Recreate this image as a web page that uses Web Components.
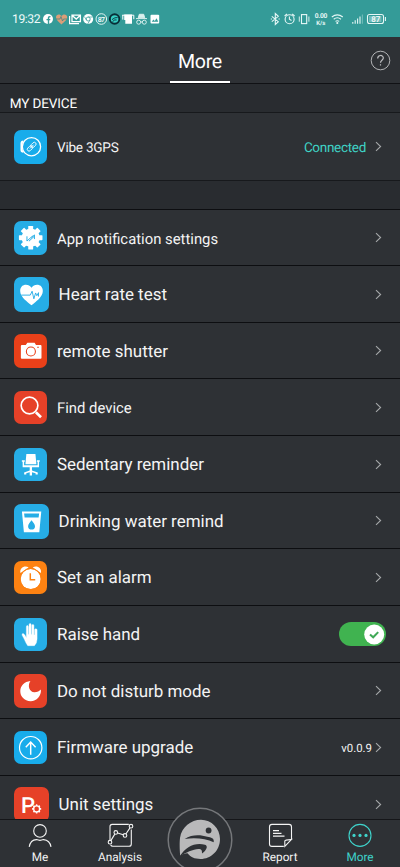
<!DOCTYPE html>
<html lang="en">
<head>
<meta charset="utf-8">
<title>More</title>
<style>
html,body{margin:0;height:100%;background:#2e3135}
body{font-family:Roboto,"Noto Sans",sans-serif;color:#f4f4f4;overflow:hidden;text-rendering:geometricPrecision}
</style>
</head>
<body>
<more-screen></more-screen>
<script>
const define = (name, html) => customElements.define(name, class extends HTMLElement {
  connectedCallback() {
    if (this.shadowRoot) return;
    const t = document.createElement('template');
    t.innerHTML = typeof html === 'function' ? html(this) : html;
    this.attachShadow({mode: 'open'}).append(t.content.cloneNode(true));
  }
});

const gear = (cx, cy, r, w, h, n) => {
  let s = '';
  for (let i = 0; i < n; i++) s += `<rect x="${cx - w / 2}" y="${cy - r}" width="${w}" height="${h}" rx=".6" transform="rotate(${i * 360 / n} ${cx} ${cy})"/>`;
  return s;
};

/* Tile glyphs share a 34 x 34 grid. */
const glyphs = {
  watch: ['#18aceb', `<g fill="none" stroke="#fff"><circle cx="17.8" cy="17" r="9.3" stroke-width="1.3"/><path d="M9.6 11.8Q7.6 12 7.6 13.7V20.3Q7.6 22 9.6 22.2" stroke-width="2"/><g stroke-width=".9" transform="rotate(-45 18 17)"><rect x="12.4" y="15.2" width="6.2" height="3.6" rx="1.8"/><rect x="17.4" y="15.2" width="6.2" height="3.6" rx="1.8"/><path d="M15.4 17H20.8"/></g></g>`],
  gear: ['#26ade6', `<g fill="#fff"><circle cx="17" cy="17" r="9.3"/>${gear(17, 17, 12, 5, 6, 8)}</g><path d="M13.2 15.6V20.4L19 15.2M15.2 20.6L20.8 15.4M17.8 17L20.8 14.2V18.4" fill="none" stroke="#26ade6" stroke-width="1"/>`],
  heart: ['#26ade6', `<path d="M17 27.5C13 24 6 19.4 6 13.5C6 6.4 14.2 5.7 17 10.5C19.8 5.7 28 6.4 28 13.5C28 19.4 21 24 17 27.5Z" fill="#fff"/><path d="M7 17.6H15.8L17.6 13.8L19.3 21.2L21 15.5L22.2 18.2L23.8 15.2V19" fill="none" stroke="#26ade6" stroke-width=".9"/>`],
  camera: ['#ea4019', `<path d="M8 11.2H12L13.6 9H21L22.4 11.2H27Q28 11.2 28 12.2V24.2Q28 25.2 27 25.2H8Q7 25.2 7 24.2V12.2Q7 11.2 8 11.2Z" fill="#fff"/><circle cx="17.2" cy="17.8" r="4.6" fill="none" stroke="#ea4019" stroke-width="1.1"/><rect x="23.6" y="13" width="1.7" height="1" fill="#ea4019"/>`],
  search: ['#e64128', `<circle cx="15.8" cy="14.8" r="8.5" fill="none" stroke="#fff" stroke-width="1.7"/><path d="M22.3 21.7L27.5 26.7" stroke="#fff" stroke-width="2.7"/>`],
  chair: ['#26ade6', `<g fill="#fff"><path d="M12.6 6.2H21.8L22.8 16.5H11.6Z"/><path d="M8 12.6H11V14H10.3V17.5H24V14H23.2V12.6H26.2V14H25.5V19.7H18.3V23L24.2 25V27H22V25.8L18.3 24.8V28H16V24.8L12.5 25.8V27H10.3V25L16 23V19.7H8.8V14H8Z"/></g>`],
  cup: ['#26ade6', `<path d="M7.7 7.4H26.5L24.6 27.4H9.6ZM9.8 9.2L10.3 13.1H23.9L24.4 9.2Z" fill="#fff" fill-rule="evenodd"/><path d="M17 15.8C18.5 18 20.4 19.7 20.4 21.5A3.3 3.3 0 0 1 13.7 21.5C13.7 19.7 15.6 18 17 15.8Z" fill="#26ade6"/>`],
  alarm: ['#fd8212', `<g fill="#fff"><circle cx="17" cy="18.4" r="10.2"/><path d="M6.6 12.2C5.3 6.3 11.5 4 14.9 6.5ZM27.4 12.2C28.7 6.3 22.5 4 19.1 6.5Z"/></g><circle cx="17" cy="18.4" r="10.8" fill="none" stroke="#fd8212" stroke-width="1"/><path d="M16.6 12.6V19H21.6" fill="none" stroke="#fd8212" stroke-width="1.5"/>`],
  hand: ['#26ade6', `<path d="M12.6 20V9Q12.6 7.7 13.6 7.7T14.6 9V16.5H15.3V6.9Q15.3 5.7 16.4 5.7T17.5 6.9V16.5H18.2V7.7Q18.2 6.6 19.2 6.6T20.3 7.7V17H21V12Q21 11 22.2 11T23.5 12V21.5Q23.5 25.5 20.8 28.2H14Q12 25.5 10.4 21.5L8.2 17.4Q8 15.6 9.4 15.9Q10.8 16.4 12.6 20Z" fill="#fff" stroke="#fff" stroke-width=".4"/>`],
  moon: ['#e64128', `<path d="M16.7 7.2C13.5 11.5 15.5 18.6 20.8 18.6C23.8 18.6 25.9 17.4 27.4 15.8C28 22.5 23 27.7 17 27.7C10.5 27.7 6.3 23 6.4 17.4C6.5 12 10.6 7.9 16.7 7.2Z" fill="#fff"/>`],
  upgrade: ['#18aceb', `<g fill="none" stroke="#fff"><circle cx="17" cy="17" r="11.4" stroke-width="1.2"/><path d="M17 24.2V11.4M12 16.5L17 11.3L22 16.5" stroke-width="1.5"/></g>`],
  unit: ['#e64128', `<text x="6.8" y="25" font-size="21.5" font-family="Roboto,sans-serif" font-weight="500" fill="#fff">P</text><circle cx="22" cy="21.3" r="4.9" fill="#e64128"/><circle cx="22" cy="21.3" r="2.9" fill="none" stroke="#fff" stroke-width="1.3"/><g fill="#fff">${gear(22, 21.3, 4.5, 1.6, 1.6, 8)}</g>`]
};
define('tile-icon', el => {
  const [bg, art] = glyphs[el.getAttribute('name')], s = el.getAttribute('size');
  return `<style>:host{display:block;width:${s}px;height:${s}px;border-radius:7px;background:${bg};overflow:hidden;flex:none}svg{display:block;width:100%;height:100%}</style><svg viewBox="0 0 34 34">${art}</svg>`;
});

define('status-bar', `<style>
:host{display:flex;height:37px;box-sizing:border-box;background:#349b98;align-items:center;padding:0 11px 0 12px;justify-content:space-between;color:#eefafa}
div{display:flex;align-items:center}svg{display:block}
.time{font-size:12.2px;width:31px;white-space:nowrap;letter-spacing:-.45px;padding-top:1px}
</style>
<div><span class="time">19:32</span>
<svg width="118" height="16" viewBox="43 10 118 16">
<circle cx="48" cy="18" r="5" fill="#fff"/><path d="M48.5 23V17Q48.5 15.5 50.5 15.6M46.5 18.6H50.3" stroke="#349b98" stroke-width="1.4" fill="none"/>
<path d="M61.5 23.4C59 21 56 18.8 56 16.2C56 13 60 12.5 61.5 15C63 12.5 67.2 13 67.2 16.2C67.2 18.8 64 21 61.5 23.4Z" fill="#d99e78"/><path d="M56 18H60L61 15.5L62.5 20L63.5 18H67" stroke="#4a8582" stroke-width=".8" fill="none"/>
<path d="M69.6 15V22.6H79" fill="none" stroke="#fff" stroke-width="1.2"/><path d="M72 14.2H80.4V20.7H72ZM72 14.2L76.2 18L80.4 14.2" fill="none" stroke="#fff" stroke-width="1.3"/>
<circle cx="88.2" cy="18" r="5" fill="#fff"/><circle cx="88.2" cy="18" r="2" fill="none" stroke="#349b98" stroke-width=".8"/><path d="M88.2 16H92.7M86.5 19L84.3 15.5M90 19L87.7 23" stroke="#349b98" stroke-width=".7"/>
<circle cx="101.3" cy="18" r="5.3" fill="none" stroke="#e0f4f3" stroke-width="1"/><text x="97.7" y="20.6" font-size="7" font-weight="500" font-family="Roboto,sans-serif" fill="#fff" textLength="7.2">87</text>
<circle cx="114.6" cy="18" r="5.7" fill="#082e37"/><circle cx="114.6" cy="18" r="3.8" fill="#35cfc4"/><path d="M112 18.6Q115 16 117.6 16.6M112.5 20.6Q115 18 116.6 19" stroke="#082e37" stroke-width=".9" fill="none"/>
<path d="M124.2 13.4H132V22.8H125.3V19H124.2Z" fill="#fff"/><path d="M122.3 14.2H133.8V18.2M122.8 14V18.6" stroke="#fff" fill="none"/>
<path d="M136 17.6H147M138.3 16.8L139.3 13.3H143.7L144.7 16.8Z" stroke="#d8efed" fill="#d8efed"/><g fill="none" stroke="#d8efed"><circle cx="138.7" cy="21.2" r="2"/><circle cx="144.3" cy="21.2" r="2"/><path d="M140.7 21H142.3"/></g>
<rect x="150.5" y="13.7" width="8.7" height="8.8" rx="1" fill="#fff"/><path d="M151.7 20.8L153.4 18.5L154.8 20L156.5 17.3L158.3 20.8Z" fill="#349b98"/>
</svg></div>
<svg width="119" height="16" viewBox="270 10 119 16" fill="none" stroke="#e6f7f6" stroke-width="1.1">
<path d="M271.8 15.3L278.3 20.7L275.3 23.5V12.5L278.3 15.3L271.8 20.7M270.8 18H272M278.5 18H279.8"/>
<circle cx="289.6" cy="18.2" r="4.5"/><path d="M289.4 15.5V18.3L291.5 19.5M284.6 15L287 13M292.2 13L294.6 15"/>
<rect x="301.5" y="13.6" width="5.2" height="9"/><path d="M299.3 15.5V20.7M308.9 15.5V20.7" stroke-width=".9"/>
<g fill="#e6f7f6" stroke="none" font-family="Roboto,sans-serif" font-weight="700"><text x="314.8" y="17.4" font-size="6.7" textLength="12.5">0.00</text><text x="316.3" y="23.8" font-size="6" textLength="9">K/s</text></g>
<path d="M331.8 16Q337.3 11.7 342.8 16M333.7 18.2Q337.3 15.3 341 18.2M335.5 20.4Q337.3 19 339.2 20.4"/><circle cx="337.3" cy="22" r=".5"/>
<path d="M352.8 21V22.8M355.2 19.3V22.8M357.6 17.5V22.8M360 15.5V22.8"/><path d="M362.4 13.5V22.8" opacity=".35"/>
<rect x="367.5" y="13.5" width="16" height="9" rx="2"/><path d="M385.4 16V20"/><rect x="369" y="15" width="12.5" height="6" fill="#e6f7f6" stroke="none" opacity=".35"/>
<text x="371.2" y="20.9" font-size="8" font-weight="500" font-family="Roboto,sans-serif" fill="#fff" stroke="none" textLength="9">87</text>
</svg>`);

define('page-header', `<style>
:host{display:grid;grid-template-columns:1fr 60px 1fr;height:47px;box-sizing:border-box;border-bottom:1px solid #101114;background:#2e3135}
h1{margin:0;font:400 19.6px/46px Roboto,sans-serif;letter-spacing:-.3px;height:46px;color:#fff;text-align:center;box-shadow:inset 0 -2px #fff;padding-top:2px;box-sizing:border-box}
svg{grid-column:3;justify-self:end;margin:13px 9px 0 0}
</style><span></span><h1><slot></slot></h1>
<svg width="21" height="21" viewBox="0 0 21 21" fill="none" stroke="#c0c1c3"><circle cx="10.5" cy="10.5" r="9.3" stroke-width=".9"/><path d="M7.7 8.5C7.7 4.4 13.3 4.7 13.3 8C13.3 10.3 10.5 10.2 10.5 12.8M10.5 14.2V15.6" stroke-width="1.2"/></svg>`);

define('section-label', `<style>:host{display:block;height:29px;box-sizing:border-box;background:#292c30;border-bottom:1px solid #17191c;padding-left:9.7px;font-size:13.5px;letter-spacing:-.1px;line-height:41px;color:#fff}</style><slot></slot>`);

define('setting-row', el => `<style>
:host{display:flex;align-items:center;height:${el.getAttribute('h')}px;box-sizing:border-box;border-bottom:1px solid ${el.getAttribute('line') || '#0d0e11'};padding:1px 17px 0 14px;background:#2e3135;flex:none}
.label{margin-left:9.6px;padding-top:1px;font-size:${el.getAttribute('fs') || 16.95}px;line-height:20px;flex:1;white-space:nowrap;letter-spacing:${el.getAttribute('ls') || 0}px}
svg{display:block;margin-left:2px}
::slotted(*){flex:none}
</style><tile-icon name="${el.getAttribute('icon')}" size="${el.getAttribute('size') || 33.4}"></tile-icon><span class="label"><slot></slot></span><slot name="value"></slot>
${el.hasAttribute('toggle') ? '' : '<svg width="9" height="12" viewBox="0 0 9 12"><path d="M2 1.2L6.6 5.5L2 9.8" fill="none" stroke="#a5a7a9" stroke-width="1.1"/></svg>'}`);

define('toggle-switch', `<style>:host{display:flex;justify-content:flex-end;width:47px;height:24px;border-radius:12px;background:#40b350;box-sizing:border-box;padding:1.5px;margin:-1px -3px 0 0}svg{display:block}</style>
<svg width="21" height="21"><circle cx="10.2" cy="10.5" r="10" fill="#fff"/><path d="M6 10.4L9.2 13.3L14.2 8.1" fill="none" stroke="#40a957" stroke-width="2"/></svg>`);

const tabs = {
  me: '<circle cx="13" cy="8.5" r="6.3"/><path d="M2.2 24.5C3 19.8 6 17.4 9.5 17.2Q13 18.7 16.5 17.2C20 17.4 23.2 19.8 24 24.5"/>',
  analysis: '<path d="M21.8 2H5.2Q3 2 3 4.2V17.8M3.6 22.3Q4.2 23.8 5.8 23.8H22Q24.3 23.8 24.3 21.5V7"/><circle cx="3" cy="19.8" r="1.8"/><circle cx="8.8" cy="10" r="1.8"/><circle cx="18" cy="13" r="1.8"/><circle cx="24" cy="3.8" r="1.8"/><path d="M4 18L7.8 11.7M10.6 10.6L16.2 12.4M19 11.4L23 5.5"/>',
  report: '<path d="M16.8 24H5Q2.5 24 2.5 21.5V4.5Q2.5 2 5 2H22Q24.5 2 24.5 4.5V17M24.5 17L17.8 24V18.8Q18 17.8 19 17.7Z"/><path d="M6 8.2H12M6 11H14.5M6 13.7H17.5"/>',
  more: '<circle cx="13" cy="13" r="11"/><g fill="currentColor" stroke="none"><circle cx="7" cy="13" r="1.6"/><circle cx="13" cy="13" r="1.6"/><circle cx="19" cy="13" r="1.6"/></g>'
};
define('tab-item', el => `<style>:host{display:flex;flex-direction:column;align-items:center;padding-top:2px;font-size:11.8px;line-height:14px;color:${el.hasAttribute('active') ? '#3fd3cb' : '#f4f4f4'}}svg{display:block;margin-bottom:1px}</style>
<svg width="27" height="27" viewBox="0 -.4 27 27" fill="none" stroke="currentColor" stroke-width="1.1">${tabs[el.getAttribute('icon')]}</svg><slot></slot>`);

define('run-button', `<style>:host{display:block;width:66px;height:66px}svg{display:block}</style>
<svg width="66" height="66" viewBox="0 0 66 66"><circle cx="33" cy="33" r="31.8" fill="#2e3135" stroke="#75777a" stroke-width="1.5"/>
<path d="M13.2 48.5C12.6 42 12.5 35 13 31C14.5 20 24 12.7 34 12.7C44.5 12.7 53 21.3 53 32C53 43.5 44 52 33.5 52C27.5 52 23.5 50 20.5 46.3C18 46.2 15.5 47.2 13.2 48.5Z" fill="#b9b9ba"/>
<g fill="#2e3135"><circle cx="41.6" cy="23.5" r="2.9"/><path d="M17.7 32C25 27 34 27.8 40.3 29.8C44 30.5 47.5 31 46.7 35.3C39 31.5 28 30.5 17.7 32Z"/><path d="M13 49C18.5 40 28 35 38 37.7C41.4 39 39.7 43 35 46.5C35 44.5 35 43 33.5 42.3C28 41 19.5 45.7 13 49Z"/></g></svg>`);

define('tab-bar', `<style>:host{display:grid;grid-template-columns:repeat(5,80px);height:48px;box-sizing:border-box;border-top:1px solid #151619;background:#2e3135;position:relative;flex:none}
run-button{position:absolute;left:167px;top:-13px}
tab-item:nth-of-type(3){grid-column:4}</style>
<tab-item icon="me">Me</tab-item><tab-item icon="analysis">Analysis</tab-item><tab-item icon="report">Report</tab-item><tab-item icon="more" active>More</tab-item><run-button></run-button>`);

define('more-screen', `<style>
:host{display:flex;flex-direction:column;width:400px;height:867px;overflow:hidden}
main{flex:1;min-height:0;overflow:hidden;display:flex;flex-direction:column}
.gap{height:29px;box-sizing:border-box;background:#292c30;border-bottom:1px solid #0d0e11;flex:none}
.ok{color:#3fd3c6;font-size:13.5px;letter-spacing:-.3px;margin-right:6px;padding-top:1px}.ver{font-size:11.4px}
</style>
<status-bar></status-bar><page-header>More</page-header>
<main><section-label>MY DEVICE</section-label>
<setting-row icon="watch" h="68" fs="13.6" ls="-.25" line="#17191c">Vibe 3GPS<span slot="value" class="ok">Connected</span></setting-row>
<div class="gap"></div>
<setting-row icon="gear" h="56" fs="14.85">App notification settings</setting-row>
<setting-row icon="heart" h="57" size="35">Heart rate test</setting-row>
<setting-row icon="camera" h="56">remote shutter</setting-row>
<setting-row icon="search" h="57" fs="14.85">Find device</setting-row>
<setting-row icon="chair" h="57">Sedentary reminder</setting-row>
<setting-row icon="cup" h="56" size="35">Drinking water remind</setting-row>
<setting-row icon="alarm" h="57">Set an alarm</setting-row>
<setting-row icon="hand" h="57" toggle>Raise hand<toggle-switch slot="value"></toggle-switch></setting-row>
<setting-row icon="moon" h="56">Do not disturb mode</setting-row>
<setting-row icon="upgrade" h="57">Firmware upgrade<span slot="value" class="ver">v0.0.9</span></setting-row>
<setting-row icon="unit" h="57" size="35">Unit settings</setting-row>
</main><tab-bar></tab-bar>`);
</script>
</body>
</html>
